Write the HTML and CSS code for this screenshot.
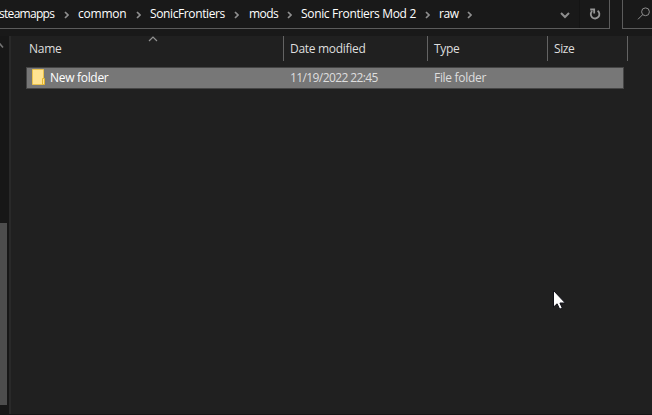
FILE: index.html
```html
<!DOCTYPE html>
<html lang="en">
<head>
<meta charset="utf-8">
<title>raw</title>
<link rel="stylesheet" href="styles.css">
</head>
<body>
<div class="window">
  <header class="toolbar">
    <nav class="address">
      <span class="crumb crumb-steamapps">steamapps</span><svg class="chevron" viewBox="0 0 5 8"><path d="M1 1l3 3-3 3"/></svg>
      <span class="crumb crumb-common">common</span><svg class="chevron" viewBox="0 0 5 8"><path d="M1 1l3 3-3 3"/></svg>
      <span class="crumb crumb-game">SonicFrontiers</span><svg class="chevron" viewBox="0 0 5 8"><path d="M1 1l3 3-3 3"/></svg>
      <span class="crumb crumb-mods">mods</span><svg class="chevron" viewBox="0 0 5 8"><path d="M1 1l3 3-3 3"/></svg>
      <span class="crumb crumb-mod">Sonic Frontiers Mod 2</span><svg class="chevron" viewBox="0 0 5 8"><path d="M1 1l3 3-3 3"/></svg>
      <span class="crumb crumb-raw">raw</span><svg class="chevron" viewBox="0 0 5 8"><path d="M1 1l3 3-3 3"/></svg>
      <svg class="dropdown" viewBox="0 0 10 7"><path d="M1 1l4 4 4-4"/></svg>
      <div class="refresh"><svg viewBox="0 0 12 12"><path d="M8.6 2.7A4.3 4.3 0 1 1 3.2 3"/><path d="M1.2 1.5h4v4"/></svg></div>
    </nav>
    <div class="search"><svg viewBox="0 0 14 14"><circle cx="8.5" cy="4.8" r="3.9"/><path d="M5.7 7.6L1 12.3"/></svg></div>
  </header>
  <div class="content">
    <aside class="sidebar">
      <svg class="scroll-up" viewBox="0 0 7 5"><path d="M-3 4.5L0 1l3 3.5"/></svg>
      <div class="thumb"></div>
    </aside>
    <main class="list">
      <div class="columns head">
        <div class="cell name"><span class="t-name">Name</span><svg class="sort" viewBox="0 0 10 6"><path d="M1 5l4-4 4 4"/></svg></div>
        <div class="cell"><span class="t-date">Date modified</span></div>
        <div class="cell"><span class="t-type">Type</span></div>
        <div class="cell"><span class="t-size">Size</span></div>
      </div>
      <div class="columns row">
        <div class="item"><svg class="folder" viewBox="0 0 13 17"><path class="back" d="M.5.5h11v15H.5z"/><path class="front" d="M10.5 9.5h2v6h-2z"/></svg><span class="t-folder">New folder</span></div>
        <span class="meta t-stamp">11/19/2022 22:45</span>
        <span class="meta t-kind">File folder</span>
      </div>
    </main>
  </div>
  <svg class="pointer" viewBox="0 0 14 20"><path d="M.5.5v16.6l3.6-3.3 2.6 5.4 2.6-1.2-2.4-5h5.4z"/></svg>
</div>
</body>
</html>
```
FILE: styles.css
```css
* { box-sizing: border-box; }
body {
  margin: 0;
  background: #191919;
  color: #fff;
  font: 12px/16px "Open Sans", "Noto Sans", sans-serif;
}
svg { display: block; fill: none; flex: none; }
span { white-space: nowrap; }
.window { position: relative; width: 652px; height: 415px; overflow: hidden; display: flex; flex-direction: column; }
.toolbar { display: flex; height: 36px; gap: 12px; }
.address {
  width: 610px; height: 29px; display: flex; align-items: center;
  border: solid #5c5c5c; border-width: 0 1px 1px 0;
}
.crumb { flex: none; margin-left: 10px; font-weight: 500; }
.crumb-steamapps { width: 66px; margin-left: -1px; letter-spacing: -.7px; }
.crumb-common { width: 59px; letter-spacing: -.22px; }
.crumb-game { width: 85px; letter-spacing: -.38px; }
.chevron + .crumb-mods { width: 39px; margin-left: 9px; letter-spacing: -.55px; }
.crumb-mod { width: 125px; letter-spacing: -.33px; }
.crumb-raw { width: 29px; letter-spacing: -.45px; }
.chevron { width: 5px; height: 8px; stroke: #8e8e8e; stroke-width: 1.7; margin: 1px 0 0 -1px; }
.chevron + .crumb { margin-left: 10px; }
.chevron + .crumb-common,
.chevron + .crumb-game,
.chevron + .crumb-mod,
.chevron + .crumb-raw { margin-left: 9px; }
.dropdown { width: 10px; height: 7px; stroke: #8e8e8e; stroke-width: 2; margin: 2px 9px 0 auto; }
.refresh { width: 30px; height: 28px; border-left: 1px solid #141414; padding: 8px 0 0 9px; }
.refresh svg { width: 12px; height: 12px; stroke: #969696; stroke-width: 1.8; }
.search { flex: 1; height: 29px; border: solid #5c5c5c; border-width: 0 0 1px 1px; padding: 7px 0 0 14px; }
.search svg { width: 14px; height: 14px; stroke: #8e8e8e; stroke-width: 1; }
.content { flex: 1; display: flex; border-bottom: 1px solid #151515; }
.sidebar { width: 9px; background: #171717; }
.scroll-up { width: 7px; height: 5px; stroke: #747474; stroke-width: 1.6; margin-top: 7px; }
.thumb { width: 7px; height: 182px; background: #4d4d4d; margin-top: 175px; }
.list { flex: 1; background: #202020; border-left: 2px solid #292929; }
.columns { display: grid; grid-template-columns: 257px 144px 120px 80px; }
.head { height: 25px; padding-left: 16px; }
.cell { border-right: 1px solid #636363; padding: 5px 0 0 6px; color: #dedede; }
.cell:first-child { padding-left: 2px; }
.name { position: relative; }
.sort { position: absolute; left: 121px; top: 0; width: 10px; height: 6px; stroke: #929292; stroke-width: 1.2; }
.row {
  width: 598px; height: 22px; margin: 6px 0 0 15px;
  grid-template-columns: 257px 144px 1fr;
  background: #777; border: 1px solid #454545; align-items: center;
}
.item { display: flex; align-items: center; padding-left: 5px; }
.folder { width: 13px; height: 17px; margin: -1px 5px 0 0; }
.back { fill: #ffe391; stroke: #eac24c; }
.front { fill: #ffe391; stroke: #e3b630; }
.meta { color: #dedede; padding-left: 6px; }
.t-name { letter-spacing: -.25px; }
.t-date { letter-spacing: -.3px; }
.t-type { letter-spacing: -.3px; }
.t-size { letter-spacing: -.4px; }
.t-folder { letter-spacing: -.3px; }
.t-stamp { letter-spacing: -.6px; }
.t-kind { letter-spacing: -.3px; }
.pointer {
  position: absolute; left: 553px; top: 290px; width: 14px; height: 20px;
  fill: #fff; stroke: #101018; stroke-width: 1;
}
```
